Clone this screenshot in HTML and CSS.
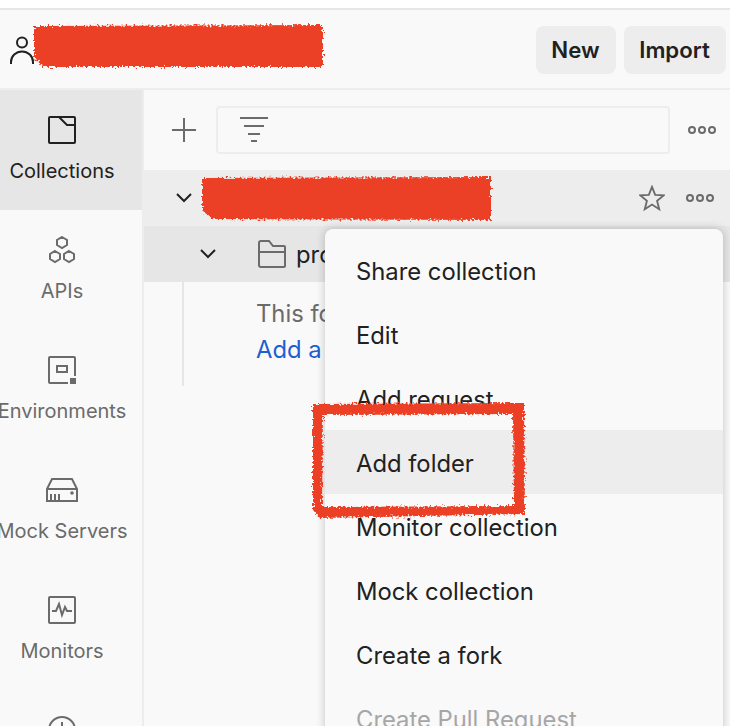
FILE: index.html
```html
<!DOCTYPE html>
<html lang="en">
<head>
<meta charset="utf-8">
<title>Postman</title>
<link rel="stylesheet" href="styles.css">
</head>
<body>
<div class="page">
  <header class="topbar">
    <div class="account">
      <svg class="icon-user" viewBox="0 0 24 28" fill="none"><circle cx="12" cy="6.5" r="5" /><path d="M1 28v-2a11 10.5 0 0 1 22 0v2" /></svg>
    </div>
    <div class="actions">
      <button class="btn btn-new">New</button>
      <button class="btn btn-import">Import</button>
    </div>
  </header>
  <div class="app">
    <nav class="sidebar">
      <a class="nav-item active">
        <svg class="nav-icon" viewBox="0 0 28 28"><path d="M2 1h24a1 1 0 0 1 1 1v24a1 1 0 0 1-1 1H2a1 1 0 0 1-1-1V2a1 1 0 0 1 1-1zM11 1l8 8h8" /></svg>
        <span>Collections</span>
      </a>
      <a class="nav-item">
        <svg class="nav-icon" viewBox="0 0 28 28"><path d="M14 1l5 3v5l-5 3-5-3V4zM7 15l5 3v5l-5 3-5-3v-5zM21 15l5 3v5l-5 3-5-3v-5z" /></svg>
        <span>APIs</span>
      </a>
      <a class="nav-item">
        <svg class="nav-icon" viewBox="0 0 28 28"><path d="M20 27H2a1 1 0 0 1-1-1V2a1 1 0 0 1 1-1h24a1 1 0 0 1 1 1v18M9 10h10v6H9z" /><rect class="fill" x="22" y="22" width="6" height="6" /></svg>
        <span>Environments</span>
      </a>
      <a class="nav-item">
        <svg class="nav-icon nav-icon-wide" viewBox="0 0 32 24"><path d="M1 11L6 1h20l5 10v12H1zM1 11h30M5 23v-7M9 23v-7M13 23v-7" /><circle class="fill" cx="26" cy="15" r="1.8" /></svg>
        <span>Mock Servers</span>
      </a>
      <a class="nav-item">
        <svg class="nav-icon" viewBox="0 0 28 28"><path d="M2 1h24a1 1 0 0 1 1 1v24a1 1 0 0 1-1 1H2a1 1 0 0 1-1-1V2a1 1 0 0 1 1-1zM4 15h4l3-7 3 11 3-8 2 4h5" /></svg>
        <span>Monitors</span>
      </a>
      <a class="nav-item">
        <svg class="nav-icon" viewBox="0 0 28 28"><circle cx="14" cy="14" r="13" /><path d="M14 6v9l5 4" /></svg>
        <span>History</span>
      </a>
    </nav>
    <main class="panel">
      <div class="toolbar">
        <svg class="icon-plus" viewBox="0 0 24 24"><path d="M12 0v24M0 12h24" /></svg>
        <div class="search">
          <svg class="icon-filter" viewBox="0 0 28 26"><path d="M0 1h28M4 9h20M8 17h12M11 24h6" /></svg>
        </div>
        <svg class="icon-dots" viewBox="0 0 28 10"><circle cx="4" cy="5" r="3" /><circle cx="14" cy="5" r="3" /><circle cx="24" cy="5" r="3" /></svg>
      </div>
      <div class="row row-collection">
        <svg class="chevron" viewBox="0 0 16 10"><path d="M1 1l7 7 7-7" /></svg>
        <div class="row-end">
          <svg class="icon-star" viewBox="0 0 28 28"><path d="M14 2l3.4 8.600 9.100.6-7 5.900 2.300 9-7.800-5-7.800 5 2.300-9-7-5.900 9.100-.6z" /></svg>
          <svg class="icon-dots" viewBox="0 0 28 10"><circle cx="4" cy="5" r="3" /><circle cx="14" cy="5" r="3" /><circle cx="24" cy="5" r="3" /></svg>
        </div>
      </div>
      <div class="row row-folder">
        <svg class="chevron" viewBox="0 0 16 10"><path d="M1 1l7 7 7-7" /></svg>
        <svg class="icon-folder" viewBox="0 0 28 28"><path d="M3 1h8l4 5h11a1 1 0 0 1 1 1v19a1 1 0 0 1-1 1H3a2 2 0 0 1-2-2V3a2 2 0 0 1 2-2zM1 12h26" /></svg>
        <span class="folder-name">project</span>
      </div>
      <div class="folder-body">
        <p class="empty">This folder is empty</p>
        <a class="add-link">Add a request</a>
      </div>
    </main>
  </div>
  <ul class="menu">
    <li>Share collection</li>
    <li>Edit</li>
    <li>Add request</li>
    <li class="hover">Add folder</li>
    <li>Monitor collection</li>
    <li>Mock collection</li>
    <li>Create a fork</li>
    <li class="disabled">Create Pull Request</li>
  </ul>
  <svg class="annotations" viewBox="0 0 730 726">
    <defs>
      <filter id="rough" x="-5%" y="-5%" width="110%" height="110%">
        <feTurbulence type="fractalNoise" baseFrequency="0.5" numOctaves="2" seed="4" />
        <feDisplacementMap in="SourceGraphic" scale="7" xChannelSelector="R" yChannelSelector="G" />
      </filter>
    </defs>
    <g class="scribble">
      <path d="M34 26L323 25V67L44 67L34 58z" />
      <path d="M202 178L491 177V220L212 219L202 210z" />
      <path fill-rule="evenodd" d="M313 404L524 403L525 514L320 518L313 510zM323 415L322 507L514 506L513 414z" />
    </g>
  </svg>
</div>
</body>
</html>
```
FILE: styles.css
```css
* { box-sizing: border-box; }
html, body { margin: 0; padding: 0; }
body {
  background: #fff;
  font-family: Inter, "Liberation Sans", sans-serif;
  color: #212121;
  overflow: hidden;
}
.page {
  position: relative;
  width: 730px;
  height: 726px;
  padding-top: 8px;
  overflow: hidden;
  background: #f9f9f9;
  box-shadow: inset 0 8px 0 #fff;
}
svg { display: block; flex: none; fill: none; }
.topbar {
  height: 82px;
  border-top: 2px solid #e6e6e6;
  border-bottom: 2px solid #ededed;
  padding: 16px 4px 0 10px;
  display: flex;
  justify-content: space-between;
  align-items: flex-start;
}
.account { padding-top: 10px; }
.icon-user { width: 24px; height: 28px; stroke: #212121; stroke-width: 2; }
.actions { display: flex; gap: 8px; }
.btn {
  height: 48px;
  border: 0;
  border-radius: 8px;
  background: #ededed;
  color: #212121;
  font: 600 22.2px Inter, sans-serif;
  padding: 0 1px 2px 0;
}
.btn-new { width: 80px; }
.btn-import { width: 102px; }
.app { display: flex; height: 636px; }
.sidebar {
  width: 144px;
  flex: none;
  border-right: 2px solid #ededed;
}
.nav-item {
  height: 120px;
  padding: 26px 18px 0 0;
  display: flex;
  flex-direction: column;
  align-items: center;
  gap: 13px;
  font-size: 20px;
  line-height: 28px;
  color: #6b6b6b;
  white-space: nowrap;
}
.nav-item.active { background: #e6e6e6; color: #212121; }
.nav-icon { width: 28px; height: 28px; stroke: currentColor; stroke-width: 2; }
.nav-icon-wide { width: 32px; height: 24px; margin: 2px 0; }
.nav-icon .fill { fill: currentColor; stroke: none; }
.panel { flex: 1; min-width: 0; }
.toolbar {
  height: 80px;
  padding: 0 14px 0 28px;
  display: flex;
  align-items: center;
}
.icon-plus { width: 24px; height: 24px; stroke: #6b6b6b; stroke-width: 2; }
.search {
  width: 454px;
  height: 48px;
  margin: 0 18px 0 20px;
  border: 2px solid #ededed;
  border-radius: 4px;
  padding: 9px 0 0 22px;
}
.icon-filter { width: 28px; height: 26px; stroke: #6b6b6b; stroke-width: 2; }
.icon-dots { width: 28px; height: 10px; stroke: #6b6b6b; stroke-width: 2; }
.row { height: 56px; display: flex; align-items: center; }
.row-collection { background: #ededed; padding: 0 16px 0 32px; justify-content: space-between; }
.row-end { display: flex; align-items: center; gap: 21px; }
.icon-star { width: 26px; height: 26px; stroke: #6b6b6b; stroke-width: 2; }
.chevron { width: 16px; height: 10px; stroke: #212121; stroke-width: 2; }
.row-folder { background: #e6e6e6; padding-left: 56px; }
.icon-folder { width: 28px; height: 28px; margin-left: 42px; stroke: #6b6b6b; stroke-width: 2; }
.folder-name { margin-left: 10px; font-size: 23.800px; }
.folder-body {
  height: 104px;
  margin-left: 38px;
  padding: 14px 0 0 72px;
  border-left: 2px solid #e6e6e6;
  font-size: 23.800px;
  line-height: 36px;
}
.empty { margin: 0; color: #6b6b6b; }
.add-link { color: #1d5fd1; }
.menu {
  position: absolute;
  left: 325px;
  top: 229px;
  width: 398px;
  height: 530px;
  margin: 0;
  padding: 9px 0;
  list-style: none;
  background: #f9f9f9;
  border-radius: 8px;
  box-shadow: 0 0 10px rgba(0, 0, 0, .22);
  font-size: 23.800px;
}
.menu li {
  height: 64px;
  padding: 2px 0 0 31px;
  display: flex;
  align-items: center;
}
.menu .hover { background: #ededed; }
.menu .disabled { color: #a6a6a6; }
.annotations {
  position: absolute;
  inset: 0;
  width: 730px;
  height: 726px;
  pointer-events: none;
}
.scribble { fill: #ec4125; filter: url(#rough); }
```
